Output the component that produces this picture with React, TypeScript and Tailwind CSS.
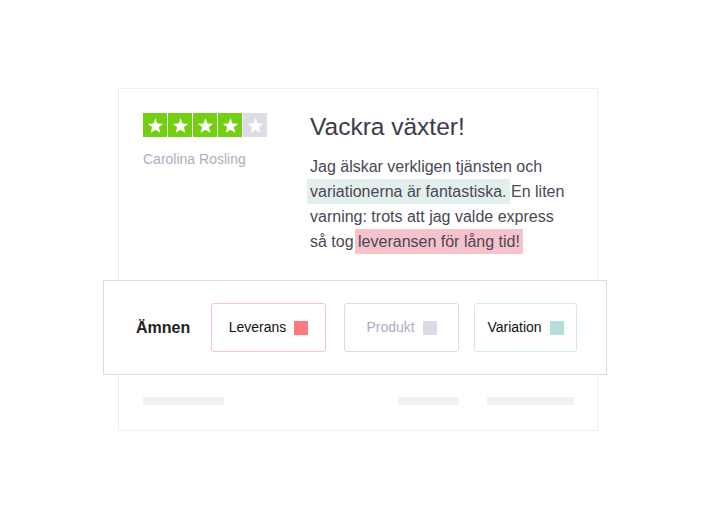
import React from 'react';

const font = { fontFamily: '"Liberation Sans", Arial, sans-serif' };

function Star({ on }: { on: boolean }) {
    return (
        <div className={`flex h-[24px] w-[24px] items-center justify-center ${on ? 'bg-[#73cf11]' : 'bg-[#dcdce6]'}`}>
            <svg viewBox="0 0 24 24" className="h-[17px] w-[17px]" fill="#ffffff">
                <path d="M12 1.8l2.9 7.4 7.9.4-6.1 5 2.1 7.7L12 17.9l-6.8 4.4 2.1-7.7-6.1-5 7.9-.4z" />
            </svg>
        </div>
    );
}

function Chip({ label, className, textClass, squareClass }: { label: string; className: string; textClass: string; squareClass: string }) {
    return (
        <div className={`flex h-[49px] items-center justify-center gap-[8px] rounded-[3px] border border-solid ${className}`}>
            <span className={`text-[14px] ${textClass}`}>{label}</span>
            <span className={`h-[14px] w-[14px] ${squareClass}`} />
        </div>
    );
}

export default function App() {
    return (
        <div className="min-h-[520px] w-full bg-white pt-[88px] pl-[118px]" style={font}>
            <div className="flex w-[480px] flex-col border border-[#eeeeee] bg-white">
                {/* Review */}
                <div className="flex px-[24px] pt-[24px] pb-[26px]">
                    <div className="w-[167px] shrink-0">
                        <div className="flex gap-[1px]">
                            <Star on />
                            <Star on />
                            <Star on />
                            <Star on />
                            <Star on={false} />
                        </div>
                        <div className="mt-[12px] text-[14px] leading-[20px] text-[#aeadc0]">Carolina Rosling</div>
                    </div>
                    <div className="flex-1">
                        <h1 className="text-[24.5px] leading-[28px] text-[#3d3b48]">Vackra växter!</h1>
                        <p className="mt-[13px] text-[16px] leading-[25px] text-[#4a4856]">
                            Jag älskar verkligen tjänsten och{' '}
                            <span className="-mx-[3px] bg-[#e2efed] px-[3px] py-[4px]">variationerna är fantastiska.</span>{' '}
                            En liten varning: trots att jag valde express så tog{' '}
                            <span className="-mx-[3px] bg-[#f6c2cc] px-[3px] py-[4px]">leveransen för lång tid!</span>
                        </p>
                    </div>
                </div>

                {/* Topics */}
                <div className="ml-[-16px] mr-[-10px] flex h-[95px] items-center border border-[#dcdae6] bg-white pl-[32px]">
                    <div className="w-[75px] text-[16px] font-bold text-[#222222]">Ämnen</div>
                    <div className="flex">
                        <Chip label="Leverans" className="w-[115px] border-[#f7c3cd] text-[#f7c3cd]" textClass="text-[#111111]" squareClass="bg-[#ff7a7c]" />
                        <Chip label="Produkt" className="ml-[18px] w-[115px] border-[#dcdae6]" textClass="text-[#aeadc0]" squareClass="bg-[#dcdae6]" />
                        <Chip label="Variation" className="ml-[15px] w-[103px] border-[#cfece6]" textClass="text-[#111111]" squareClass="bg-[#b2e0d8]" />
                    </div>
                </div>

                {/* Footer placeholders */}
                <div className="flex items-center pt-[22px] pb-[25px] pl-[24px] pr-[23px]">
                    <div className="h-[8px] w-[81px] bg-[#f2f2f4]" />
                    <div className="flex-1" />
                    <div className="h-[8px] w-[61px] bg-[#f2f2f4]" />
                    <div className="ml-[28px] h-[8px] w-[87px] bg-[#f2f2f4]" />
                </div>
            </div>
        </div>
    );
}
